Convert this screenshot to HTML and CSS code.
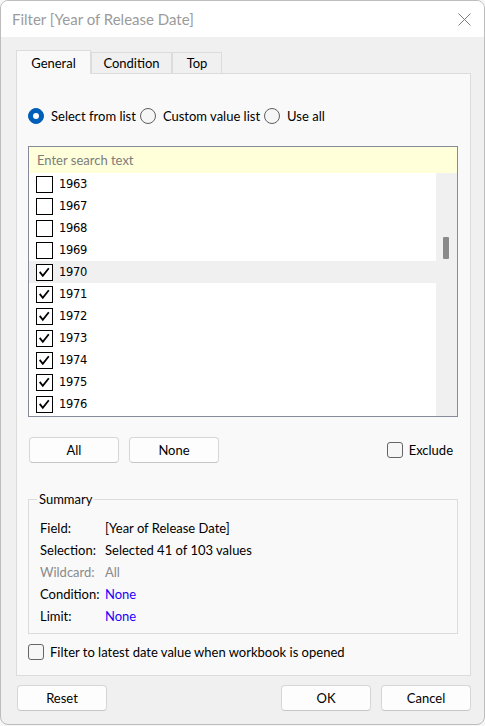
FILE: index.html
```html
<!DOCTYPE html>
<html>
<head>
<meta charset="utf-8">
<title>Filter [Year of Release Date]</title>
<link rel="stylesheet" href="styles.css">
</head>
<body>
<div class="window">
  <div class="titlebar">
    <span class="title">Filter [Year of Release Date]</span>
    <svg class="close" width="13" height="13" viewBox="0 0 13 13"><path d="M0.5 0.5L12.5 12.5M12.5 0.5L0.5 12.5" stroke="#7d7d7d" stroke-width="1" fill="none"/></svg>
  </div>
  <div class="main">
    <div class="tabs">
      <div class="tab active">General</div>
      <div class="tab t-cond">Condition</div>
      <div class="tab t-top">Top</div>
    </div>
    <div class="panel">
      <div class="radios">
        <label class="radio"><span class="rb on"></span>Select from list</label>
        <label class="radio"><span class="rb"></span>Custom value list</label>
        <label class="radio"><span class="rb"></span>Use all</label>
      </div>
      <div class="listbox">
        <div class="search">Enter search text</div>
        <div class="listarea">
          <div class="rows">
            <div class="row"><span class="cb"></span>1963</div>
            <div class="row"><span class="cb"></span>1967</div>
            <div class="row"><span class="cb"></span>1968</div>
            <div class="row"><span class="cb"></span>1969</div>
            <div class="row hl"><span class="cb"><svg viewBox="0 0 15 15" width="15" height="15"><path d="M2.7 6.9L5.8 10.7L11.8 3.2" stroke="#000" stroke-width="1.8" fill="none"/></svg></span>1970</div>
            <div class="row"><span class="cb"><svg viewBox="0 0 15 15" width="15" height="15"><path d="M2.7 6.9L5.8 10.7L11.8 3.2" stroke="#000" stroke-width="1.8" fill="none"/></svg></span>1971</div>
            <div class="row"><span class="cb"><svg viewBox="0 0 15 15" width="15" height="15"><path d="M2.7 6.9L5.8 10.7L11.8 3.2" stroke="#000" stroke-width="1.8" fill="none"/></svg></span>1972</div>
            <div class="row"><span class="cb"><svg viewBox="0 0 15 15" width="15" height="15"><path d="M2.7 6.9L5.8 10.7L11.8 3.2" stroke="#000" stroke-width="1.8" fill="none"/></svg></span>1973</div>
            <div class="row"><span class="cb"><svg viewBox="0 0 15 15" width="15" height="15"><path d="M2.7 6.9L5.8 10.7L11.8 3.2" stroke="#000" stroke-width="1.8" fill="none"/></svg></span>1974</div>
            <div class="row"><span class="cb"><svg viewBox="0 0 15 15" width="15" height="15"><path d="M2.7 6.9L5.8 10.7L11.8 3.2" stroke="#000" stroke-width="1.8" fill="none"/></svg></span>1975</div>
            <div class="row"><span class="cb"><svg viewBox="0 0 15 15" width="15" height="15"><path d="M2.7 6.9L5.8 10.7L11.8 3.2" stroke="#000" stroke-width="1.8" fill="none"/></svg></span>1976</div>
          </div>
          <div class="scroll"><div class="thumb"></div></div>
        </div>
      </div>
      <div class="btnrow">
        <div class="btns"><button class="btn">All</button><button class="btn">None</button></div>
        <label class="chk"><span class="box"></span>Exclude</label>
      </div>
      <fieldset class="summary">
        <legend>Summary</legend>
        <div class="srow"><span class="k">Field:</span><span class="v">[Year of Release Date]</span></div>
        <div class="srow"><span class="k">Selection:</span><span class="v">Selected 41 of 103 values</span></div>
        <div class="srow gray"><span class="k">Wildcard:</span><span class="v">All</span></div>
        <div class="srow"><span class="k">Condition:</span><span class="v blue">None</span></div>
        <div class="srow"><span class="k">Limit:</span><span class="v blue">None</span></div>
      </fieldset>
      <label class="chk latest"><span class="box"></span>Filter to latest date value when workbook is opened</label>
    </div>
    <div class="footer">
      <button class="btn">Reset</button>
      <div class="btns"><button class="btn">OK</button><button class="btn">Cancel</button></div>
    </div>
  </div>
</div>
</body>
</html>
```
FILE: styles.css
```css
* { box-sizing: border-box; }
html, body { margin: 0; padding: 0; }
body {
  width: 485px;
  height: 726px;
  background: #f7f7f7;
  font-family: Lato, "Liberation Sans", sans-serif;
  font-size: 13px;
  color: #000;
}
.window {
  width: 485px;
  height: 725px;
  border: 1px solid #bdbdbd;
  border-radius: 8px;
  background: #f0f0f0;
  display: flex;
  flex-direction: column;
  overflow: hidden;
}
.titlebar {
  height: 36px;
  flex: none;
  background: #fff;
  display: flex;
  align-items: center;
  justify-content: space-between;
  padding: 0 13px 0 11px;
}
.title { font-size: 15px; color: #9b9b9b; }
.close { display: block; }
.main {
  padding: 13px 13px 0 15px;
  display: flex;
  flex-direction: column;
}
.tabs {
  display: flex;
  align-items: flex-end;
  height: 23px;
}
.tab {
  height: 21px;
  border: 1px solid #dcdcdc;
  border-bottom: none;
  background: #f0f0f0;
  display: flex;
  align-items: center;
  justify-content: center;
  font-size: 13px;
}
.tab.active {
  width: 75px;
  height: 24px;
  margin-bottom: -1px;
  background: #f9f9f9;
  position: relative;
  z-index: 1;
}
.t-cond { width: 81px; }
.t-top { width: 50px; }
.panel {
  height: 603px;
  border: 1px solid #dcdcdc;
  background: #f9f9f9;
  padding: 0 12px 0 11px;
  display: flex;
  flex-direction: column;
}
.radios {
  display: flex;
  align-items: center;
  height: 16px;
  margin-top: 34px;
  gap: 4px;
}
.radio { display: flex; align-items: center; gap: 7px; }
.rb {
  width: 16px;
  height: 16px;
  border-radius: 50%;
  border: 1px solid #5f5f5f;
  background: #f6f6f6;
  flex: none;
}
.rb.on {
  background: #005fb8;
  border-color: #005fb8;
  display: flex;
  align-items: center;
  justify-content: center;
}
.rb.on::after {
  content: "";
  width: 6px;
  height: 6px;
  border-radius: 50%;
  background: #fff;
}
.listbox {
  margin-top: 22px;
  height: 271px;
  border: 1px solid #868b99;
  display: flex;
  flex-direction: column;
}
.search {
  height: 26px;
  background: #ffffd9;
  padding: 0 0 1px 8px;
  color: #7c7c7c;
  display: flex;
  align-items: center;
}
.listarea { display: flex; height: 243px; }
.rows { flex: 1; background: #fff; }
.row {
  height: 22px;
  display: flex;
  align-items: center;
  padding-left: 7px;
  gap: 6px;
  font-family: "DejaVu Sans", sans-serif;
  font-size: 11.5px;
  letter-spacing: -0.3px;
}
.row.hl { background: #f0f0f0; }
.cb {
  width: 17px;
  height: 17px;
  border: 1px solid #000;
  background: #fff;
  flex: none;
}
.cb svg { display: block; }
.scroll {
  width: 21px;
  flex: none;
  background: #f0f0f0;
  padding: 64px 0 0 7px;
}
.thumb {
  width: 6px;
  height: 22px;
  background: #8a8a8a;
  border-radius: 1px;
}
.btnrow {
  margin-top: 20px;
  height: 26px;
  display: flex;
  align-items: center;
  justify-content: space-between;
  padding: 0 5px 0 1px;
}
.btns { display: flex; gap: 10px; }
.btn {
  width: 90px;
  height: 26px;
  background: #fdfdfd;
  border: 1px solid #d6d6d6;
  border-bottom-color: #c6c6c6;
  border-radius: 4px;
  font: inherit;
  font-size: 13px;
  color: #000;
  padding: 0;
}
.chk { display: flex; align-items: center; gap: 6px; }
.box {
  width: 16px;
  height: 16px;
  border: 1px solid #656565;
  border-radius: 3px;
  background: #f6f6f6;
  flex: none;
}
.summary {
  margin: 28px 0 0 0;
  padding: 10px 0 6px 11px;
  border: 1px solid #dcdcdc;
  min-width: 0;
}
.summary legend {
  padding: 0 2px;
  margin-left: -3px;
  line-height: 16px;
}
.srow { height: 22px; display: flex; align-items: center; }
.k { width: 65px; flex: none; }
.gray { color: #8a8a8a; }
.blue { color: #2200ff; }
.latest { margin-top: 10px; }
.footer {
  margin-top: 9px;
  display: flex;
  justify-content: space-between;
  padding-left: 1px;
}
```
